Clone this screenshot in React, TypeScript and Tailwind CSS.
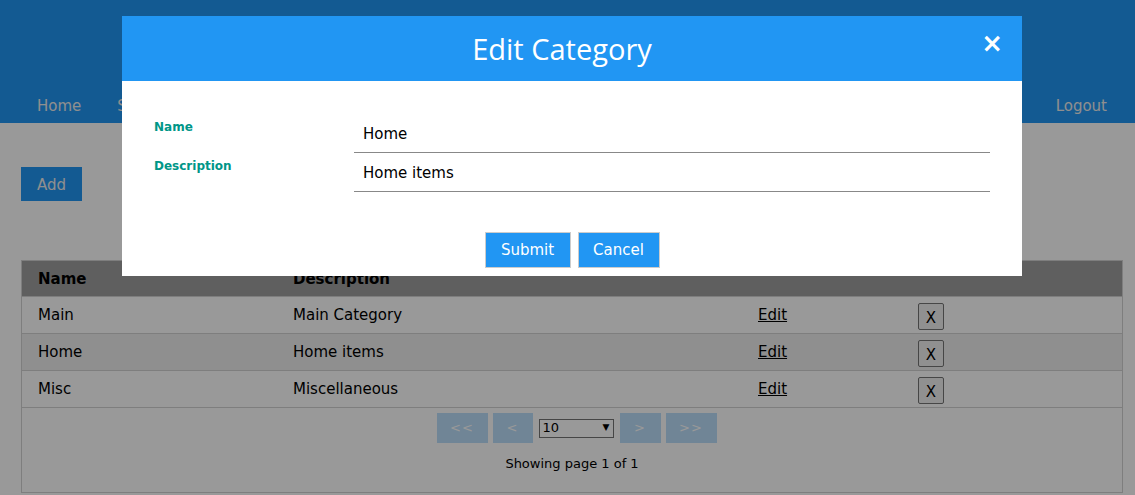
import React from 'react'

const rows = [
  { name: 'Main', desc: 'Main Category', alt: false },
  { name: 'Home', desc: 'Home items', alt: true },
  { name: 'Misc', desc: 'Miscellaneous', alt: false },
]

const navItems = ['Home', 'Settings', 'Products', 'Categories']

function PageButton({ label, w }: { label: string; w: string }) {
  return (
    <button className={`${w} h-[30px] bg-[#bbdefb] text-white text-[13px] tracking-[1px]`} disabled>
      {label}
    </button>
  )
}

export default function App() {
  return (
    <div className="relative h-[495px] w-[1135px] overflow-hidden bg-white font-['DejaVu_Sans',sans-serif] text-[15px] text-black">
      {/* ── Header ─── */}
      <header className="h-[123px] bg-[#2196f3] flex items-end">
        <nav className="w-full flex items-center h-[36px] pt-[2px] pl-[19px] pr-[10px] text-[#eeeeee]">
          {navItems.map((n) => (
            <a key={n} className="px-[18px]">{n}</a>
          ))}
          <a className="ml-auto px-[18px]">Logout</a>
        </nav>
      </header>

      {/* ── Content ─── */}
      <main className="px-[21px] pt-[44px]">
        <button className="w-[61px] h-[34px] pt-[2px] bg-[#2196f3] text-[#eeeeee] text-[15px]">Add</button>

        <div className="mt-[59px] w-[1102px] border border-[#d2d2d2]">
          <div className="grid grid-cols-[271px_449px_176px_1fr] h-[36px] items-center bg-[#9e9e9e] font-bold border-b border-[#d2d2d2] pt-[1px]">
            <div className="pl-[16px]">Name</div>
            <div>Description</div>
            <div></div>
            <div></div>
          </div>
          {rows.map((r) => (
            <div
              key={r.name}
              className={`grid grid-cols-[271px_449px_176px_1fr] h-[37px] items-center border-b border-[#d2d2d2] ${r.alt ? 'bg-[#eeeeee]' : 'bg-white'}`}
            >
              <div className="pl-[16px]">{r.name}</div>
              <div>{r.desc}</div>
              <div className="pl-[16px]"><a className="underline">Edit</a></div>
              <div className="self-start mt-[6px]">
                <button className="w-[26px] h-[27px] border border-[#767676] bg-[#f0f0f0] rounded-[2px] text-[15px] leading-none pt-[3px]">X</button>
              </div>
            </div>
          ))}
          <div className="h-[84px] flex flex-col items-center pt-[5px]">
            <div className="flex items-center gap-[5px] pl-[9px]">
              <PageButton label="<<" w="w-[51px]" />
              <PageButton label="<" w="w-[40px]" />
              <div className="w-[75px] h-[19px] border border-[#767676] bg-white flex items-center justify-between px-[3px] text-[13px] mx-[1px]">
                <span>10</span>
                <span className="text-[9px]">▼</span>
              </div>
              <PageButton label=">" w="w-[41px]" />
              <PageButton label=">>" w="w-[51px]" />
            </div>
            <div className="mt-[11px] text-[13px]">Showing page 1 of 1</div>
          </div>
        </div>
      </main>

      {/* ── Overlay ─── */}
      <div className="absolute inset-0 bg-black/40" />

      {/* ── Modal ─── */}
      <div className="absolute left-[122px] top-[16px] w-[900px] bg-white">
        <div className="relative h-[65px] bg-[#2196f3] flex items-center justify-center pr-[20px]">
          <h2 className="font-['Open_Sans',sans-serif] text-[29px] text-white leading-none">Edit Category</h2>
          <span className="absolute right-[19px] top-[14px] text-white font-bold text-[26px] leading-none">×</span>
        </div>
        <div className="px-[32px] pt-[33px]">
          <div className="flex">
            <label className="w-[200px] text-[12px] font-bold text-[#009688] pt-[4px]">Name</label>
            <div className="flex-1 h-[39px] border-b border-[#888] flex items-center pl-[9px] pt-[2px]">Home</div>
          </div>
          <div className="flex">
            <label className="w-[200px] text-[12px] font-bold text-[#009688] pt-[4px]">Description</label>
            <div className="flex-1 h-[39px] border-b border-[#888] flex items-center pl-[9px] pt-[2px]">Home items</div>
          </div>
        </div>
        <div className="flex justify-center gap-[7px] pt-[40px] pb-[8px]">
          <button className="w-[86px] h-[36px] bg-[#2196f3] border border-[#cccccc] text-white pt-[1px]">Submit</button>
          <button className="w-[82px] h-[36px] bg-[#2196f3] border border-[#cccccc] text-white pt-[1px]">Cancel</button>
        </div>
      </div>
    </div>
  )
}
